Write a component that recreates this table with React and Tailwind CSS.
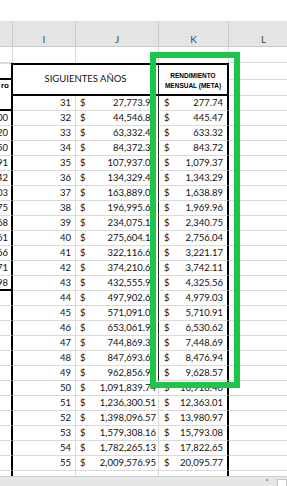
import React from 'react';

// filas 31..55: [año, siguientes años, rendimiento mensual, columna izquierda recortada]
const rows = [
    [31, '27,773.95', '277.74', null],
    [32, '44,546.83', '445.47', '4,100.00'],
    [33, '63,332.45', '633.32', '4,510.20'],
    [34, '84,372.34', '843.72', '4,961.50'],
    [35, '107,937.02', '1,079.37', '5,457.91'],
    [36, '134,329.46', '1,343.29', '6,003.42'],
    [37, '163,889.06', '1,638.89', '6,603.03'],
    [38, '196,995.68', '1,969.96', '7,263.75'],
    [39, '234,075.16', '2,340.75', '7,990.68'],
    [40, '275,604.18', '2,756.04', '8,789.61'],
    [41, '322,116.68', '3,221.17', '9,668.66'],
    [42, '374,210.68', '3,742.11', '10,635.71'],
    [43, '432,555.96', '4,325.56', '11,698.98'],
    [44, '497,902.68', '4,979.03', null],
    [45, '571,091.06', '5,710.91', null],
    [46, '653,061.92', '6,530.62', null],
    [47, '744,869.35', '7,448.69', null],
    [48, '847,693.67', '8,476.94', null],
    [49, '962,856.92', '9,628.57', null],
    [50, '1,091,839.74', '10,918.40', null],
    [51, '1,236,300.51', '12,363.01', null],
    [52, '1,398,096.57', '13,980.97', null],
    [53, '1,579,308.16', '15,793.08', null],
    [54, '1,782,265.13', '17,822.65', null],
    [55, '2,009,576.95', '20,095.77', null],
];

const grid = 'border-[#dadada]';

function ColHeader({ label, className }) {
    return (
        <div className={`shrink-0 h-full flex items-end justify-center pb-[1px] border-r border-[#c9c9c9] text-[10px] leading-[12px] text-[#444] ${className}`}>
            {label}
        </div>
    );
}

function DataRow({ year, next, meta, left }) {
    const leftBottom = year === 31 || year === 43 ? 'border-b-2 border-b-black' : `border-b ${grid}`;
    const kLeft = year <= 49 ? 'border-r border-r-[#222]' : `border-r ${grid}`;
    return (
        <div className="flex h-[15px] text-[9.5px] leading-[14px] text-[#111]">
            <div className={`w-[13px] shrink-0 flex justify-end overflow-hidden whitespace-nowrap pr-[3px] border-r-2 border-r-black ${leftBottom}`}>
                {left}
            </div>
            <div className={`w-[63px] shrink-0 flex justify-end pr-[4px] border-r border-b ${grid}`}>{year}</div>
            <div className={`w-[83px] shrink-0 flex justify-between overflow-hidden whitespace-nowrap pl-[4px] pr-[2px] border-b ${grid} ${kLeft}`}>
                <span>$</span>
                <span>{next}</span>
            </div>
            <div className={`w-[70px] shrink-0 flex justify-between pl-[5px] pr-[4px] border-r-2 border-r-black border-b ${grid}`}>
                <span>$</span>
                <span>{meta}</span>
            </div>
            <div className={`flex-1 border-b ${grid}`} />
        </div>
    );
}

export default function App() {
    return (
        <div className="relative w-[287px] h-[486px] overflow-hidden bg-white font-['Lato',sans-serif]">
            <div className="h-[21px]" />

            {/* encabezado de columnas */}
            <div className="flex h-[26px] bg-[#e4e4e4] border-b border-[#c9c9c9]">
                <ColHeader label="" className="w-[13px]" />
                <ColHeader label="I" className="w-[63px]" />
                <ColHeader label="J" className="w-[83px]" />
                <ColHeader label="K" className="w-[70px]" />
                <ColHeader label="L" className="w-[70px]" />
            </div>

            {/* fila vacía */}
            <div className="flex h-[16px]">
                <div className={`w-[13px] shrink-0 border-r border-b ${grid}`} />
                <div className={`w-[63px] shrink-0 border-r ${grid}`} />
                <div className={`w-[83px] shrink-0 border-r ${grid}`} />
                <div className={`w-[70px] shrink-0 border-r ${grid}`} />
                <div className={`flex-1 border-b ${grid}`} />
            </div>

            {/* títulos */}
            <div className="flex h-[33px]">
                <div className="w-[13px] shrink-0 flex flex-col border-r-2 border-r-black">
                    <div className={`h-[17px] border-t ${grid} border-b-2 border-b-black`} />
                    <div className="flex-1 flex justify-end overflow-hidden whitespace-nowrap pr-[2px] pt-[1px] font-['Liberation_Sans',Arial,sans-serif] font-bold text-[8px] leading-[10px]">
                        ro
                    </div>
                </div>
                <div className="w-[146px] shrink-0 flex items-center justify-center border-y-2 border-black border-r border-r-[#222] text-[9.5px] text-[#111]">
                    SIGUIENTES AÑOS
                </div>
                <div className="w-[70px] shrink-0 flex flex-col items-center justify-end pb-[3px] border-y-2 border-r-2 border-black font-['Liberation_Sans',Arial,sans-serif] font-bold text-[6.5px] leading-[10px] text-black">
                    <span>RENDIMIENTO</span>
                    <span>MENSUAL (META)</span>
                </div>
                <div className="flex-1 flex flex-col">
                    <div className={`h-[17px] border-b ${grid}`} />
                    <div className={`flex-1 border-b ${grid}`} />
                </div>
            </div>

            {rows.map(([year, next, meta, left]) => (
                <DataRow key={year} year={year} next={next} meta={meta} left={left} />
            ))}

            {/* fila cortada */}
            <div className="flex h-[5px]">
                <div className="w-[13px] shrink-0 border-r-2 border-r-black" />
                <div className={`w-[63px] shrink-0 border-r ${grid}`} />
                <div className={`w-[83px] shrink-0 border-r ${grid}`} />
                <div className="w-[70px] shrink-0 border-r-2 border-r-black" />
            </div>

            {/* barra inferior */}
            <div className="flex items-start h-[10px] bg-[#e6e6e6] border-t border-[#d0d0d0]">
                <span className="ml-[266px] mt-[2px] w-[2px] h-[2px] bg-[#999]" />
                <span className="ml-[9px] mt-[2px] w-[12px] h-[9px] bg-white border border-[#c6c6c6]" />
            </div>

            {/* marco verde */}
            <div className="absolute left-[150px] top-[52px] w-[90px] h-[336px] border-[6px] border-[#1ec548] pointer-events-none" />
        </div>
    );
}
